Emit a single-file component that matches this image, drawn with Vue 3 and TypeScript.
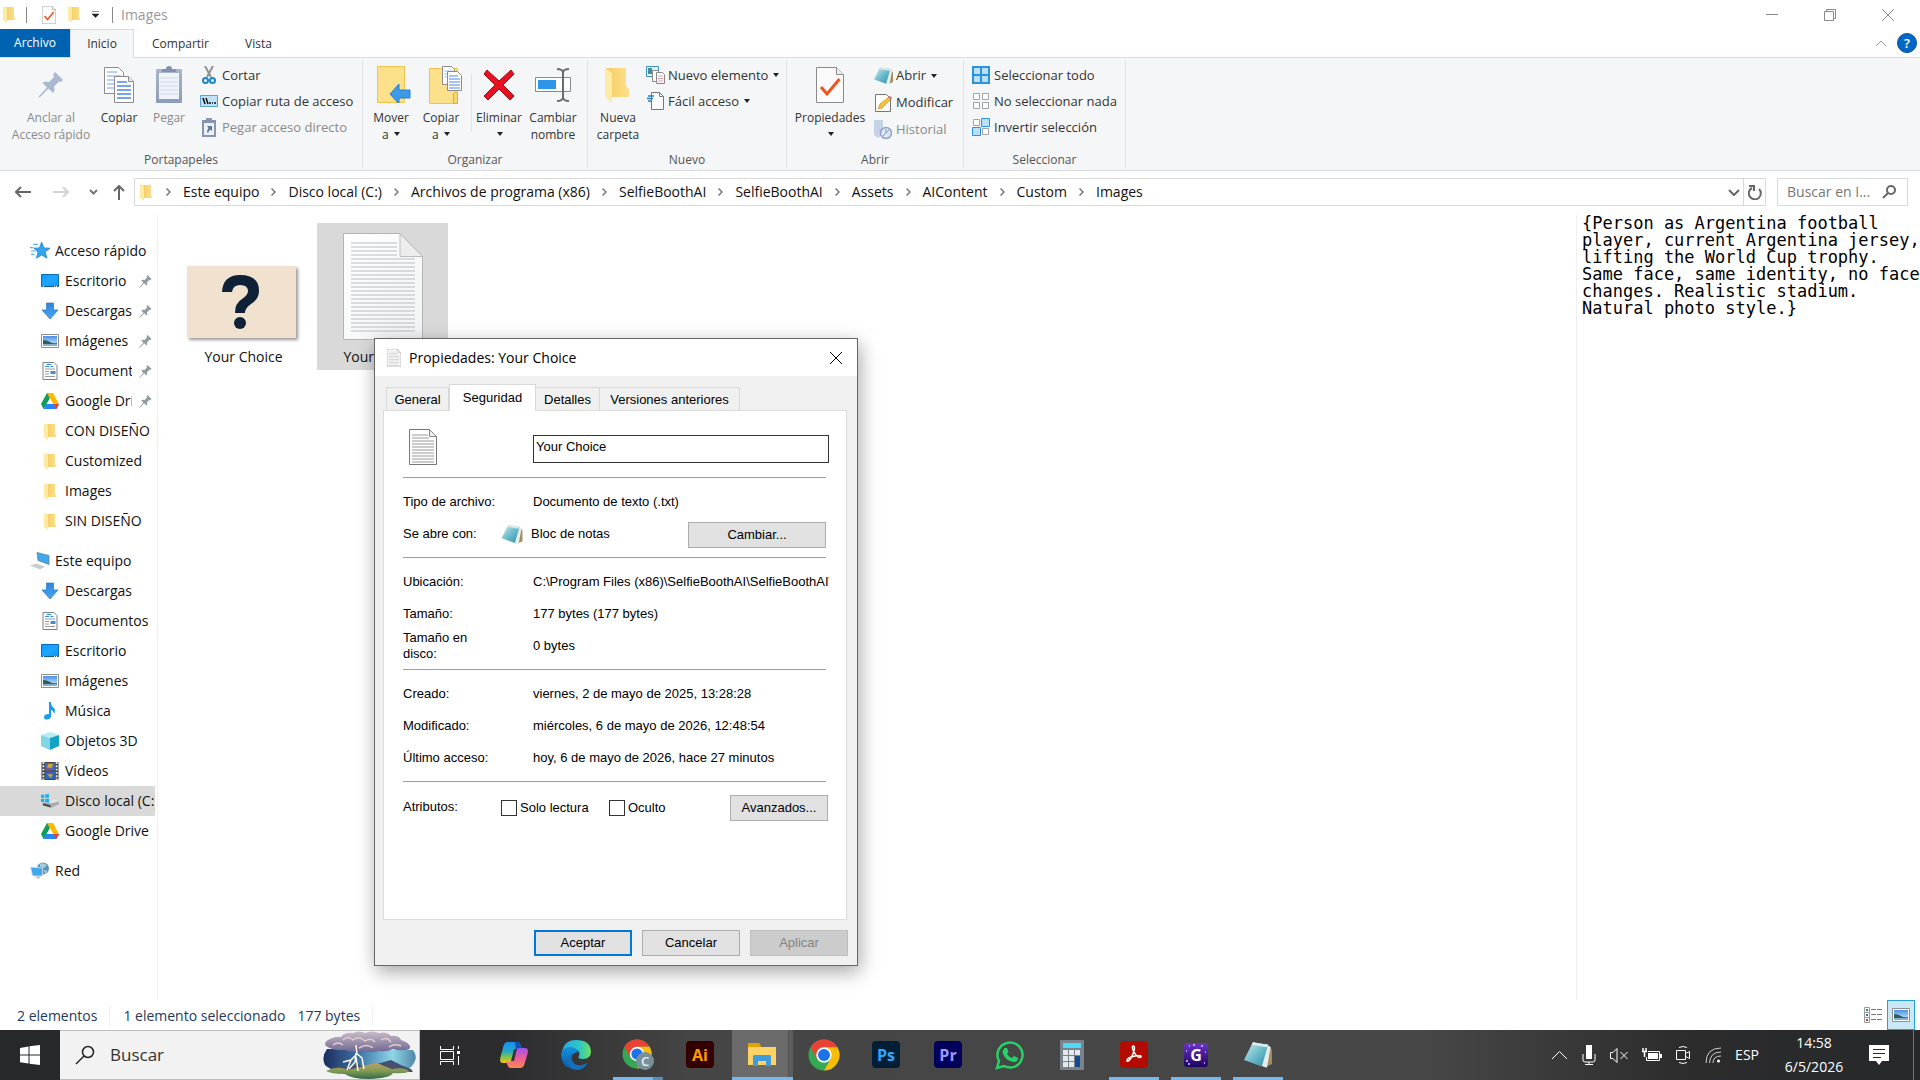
<script setup lang="ts">
import { ref } from 'vue'

interface NavItem {
  label: string
  icon: string
  pinned?: boolean
  selected?: boolean
}
interface NavGroup {
  label: string
  icon: string
  items: NavItem[]
}
interface TaskApp {
  name: string
  icon: string
  state?: 'open' | 'active' | 'multi'
  mark?: string
  markX?: number
  markY?: number
}

const crumbs: string[] = [
  'Este equipo',
  'Disco local (C:)',
  'Archivos de programa (x86)',
  'SelfieBoothAI',
  'SelfieBoothAI',
  'Assets',
  'AIContent',
  'Custom',
  'Images',
]

const navGroups: NavGroup[] = [
  {
    label: 'Acceso rápido',
    icon: 'star',
    items: [
      { label: 'Escritorio', icon: 'desktop', pinned: true },
      { label: 'Descargas', icon: 'download', pinned: true },
      { label: 'Imágenes', icon: 'picture', pinned: true },
      { label: 'Documentos', icon: 'document', pinned: true },
      { label: 'Google Drive', icon: 'gdrive', pinned: true },
      { label: 'CON DISEÑO', icon: 'folder' },
      { label: 'Customized', icon: 'folder' },
      { label: 'Images', icon: 'folder' },
      { label: 'SIN DISEÑO', icon: 'folder' },
    ],
  },
  {
    label: 'Este equipo',
    icon: 'pc',
    items: [
      { label: 'Descargas', icon: 'download' },
      { label: 'Documentos', icon: 'document' },
      { label: 'Escritorio', icon: 'desktop' },
      { label: 'Imágenes', icon: 'picture' },
      { label: 'Música', icon: 'music' },
      { label: 'Objetos 3D', icon: 'cube' },
      { label: 'Vídeos', icon: 'video' },
      { label: 'Disco local (C:)', icon: 'disk', selected: true },
      { label: 'Google Drive', icon: 'gdrive' },
    ],
  },
  { label: 'Red', icon: 'network', items: [] },
]

const apps: TaskApp[] = [
  { name: 'Copilot', icon: 'copilot' },
  { name: 'Edge', icon: 'edge' },
  { name: 'Chrome, perfil C', icon: 'chrome-profile', state: 'multi', mark: 'C', markX: 23, markY: 27 },
  { name: 'Illustrator', icon: 'ai', mark: 'Ai', markX: 14, markY: 20 },
  { name: 'Explorador de archivos', icon: 'explorer', state: 'active' },
  { name: 'Chrome', icon: 'chrome' },
  { name: 'Photoshop', icon: 'ps', mark: 'Ps', markX: 14, markY: 20 },
  { name: 'Premiere', icon: 'pr', mark: 'Pr', markX: 14, markY: 20 },
  { name: 'WhatsApp', icon: 'whatsapp' },
  { name: 'Calculadora', icon: 'calc' },
  { name: 'Acrobat', icon: 'acrobat', state: 'open' },
  { name: 'G', icon: 'gapp', state: 'open', mark: 'G', markX: 12, markY: 18 },
  { name: 'Bloc de notas', icon: 'notepad', state: 'open' },
]

const fileName = ref('Your Choice')
const readOnly = ref(false)
const hidden = ref(false)

const locationRows = [
  ['Ubicación:', 'C:\\Program Files (x86)\\SelfieBoothAI\\SelfieBoothAI\\Assets'],
  ['Tamaño:', '177 bytes (177 bytes)'],
  ['Tamaño en disco:', '0 bytes'],
]
const dateRows = [
  ['Creado:', 'viernes, 2 de mayo de 2025, 13:28:28'],
  ['Modificado:', 'miércoles, 6 de mayo de 2026, 12:48:54'],
  ['Último acceso:', 'hoy, 6 de mayo de 2026, hace 27 minutos'],
]

const previewText = `{Person as Argentina football
player, current Argentina jersey,
lifting the World Cup trophy.
Same face, same identity, no face
changes. Realistic stadium.
Natural photo style.}`
</script>

<template>
  <div class="screen">
    <svg class="sprite" aria-hidden="true">
      <defs>
        <linearGradient id="g-fold" x1="0" x2="1"><stop offset="0" stop-color="#f7cd64" /><stop offset="1" stop-color="#fbe08b" /></linearGradient>
        <linearGradient id="g-note" x1="0" y1="0" x2="1" y2="1"><stop offset="0" stop-color="#d3eef2" /><stop offset=".5" stop-color="#6fbccc" /><stop offset="1" stop-color="#2b8fa6" /></linearGradient>
        <linearGradient id="g-page" x1="0" y1="0" x2="1" y2="1"><stop offset="0" stop-color="#fff" /><stop offset="1" stop-color="#f1f3f4" /></linearGradient>
        <linearGradient id="g-clip" x1="0" y1="0" x2="0" y2="1"><stop offset="0" stop-color="#a9b5ca" /><stop offset="1" stop-color="#8d9cba" /></linearGradient>
        <linearGradient id="g-desk" x1="0" y1="0" x2="1" y2="1"><stop offset="0" stop-color="#0c9bff" /><stop offset=".5" stop-color="#1ea6ff" /><stop offset="1" stop-color="#0b95fa" /></linearGradient>
        <linearGradient id="g-arrow" x1="0" y1="0" x2="0" y2="1"><stop offset="0" stop-color="#2e86d9" /><stop offset="1" stop-color="#4aa5f0" /></linearGradient>
        <linearGradient id="g-sky" x1="0" y1="0" x2="0" y2="1"><stop offset="0" stop-color="#4d90e8" /><stop offset="1" stop-color="#d8f0fa" /></linearGradient>
        <linearGradient id="g-cop1" x1="0" y1="0" x2="0" y2="1"><stop offset="0" stop-color="#1a8df0" /><stop offset=".45" stop-color="#23a8c9" /><stop offset=".7" stop-color="#7fc24b" /><stop offset="1" stop-color="#f5c518" /></linearGradient>
        <linearGradient id="g-cop2" x1="0" y1="0" x2="0" y2="1"><stop offset="0" stop-color="#a155e8" /><stop offset=".5" stop-color="#ef5a9c" /><stop offset="1" stop-color="#fb8a4c" /></linearGradient>
        <linearGradient id="g-edge1" x1="0" y1="0" x2="1" y2="0"><stop offset="0" stop-color="#2aa7e4" /><stop offset=".6" stop-color="#2cc6c8" /><stop offset="1" stop-color="#6fe15a" /></linearGradient>
        <linearGradient id="g-edge2" x1="0" y1="0" x2="0" y2="1"><stop offset="0" stop-color="#1591dd" /><stop offset="1" stop-color="#0c59a4" /></linearGradient>
        <linearGradient id="g-storm" x1="0" y1="0" x2="1" y2="0"><stop offset="0" stop-color="#1d2c5e" /><stop offset=".4" stop-color="#3f78a8" /><stop offset=".75" stop-color="#8fd6e8" /><stop offset="1" stop-color="#4f86a8" /></linearGradient>
        <linearGradient id="g-cloud" x1="0" y1="0" x2="0" y2="1"><stop offset="0" stop-color="#c9bcc8" /><stop offset="1" stop-color="#6f6793" /></linearGradient>
        <linearGradient id="g-hill" x1="0" y1="0" x2="0" y2="1"><stop offset="0" stop-color="#c0a062" /><stop offset=".5" stop-color="#7f9a52" /><stop offset="1" stop-color="#2f6a4c" /></linearGradient>
        <linearGradient id="g-gapp" x1="0" y1="0" x2="0" y2="1"><stop offset="0" stop-color="#6b35c9" /><stop offset="1" stop-color="#1d0560" /></linearGradient>
      </defs>

      <symbol id="i-folder" viewBox="0 0 12 17"><path d="M3 1h8v10l1 1v2H3z" fill="url(#g-fold)" /><path d="M0 0l4 2v15L0 14z" fill="#fdeaa5" /></symbol>
      <symbol id="i-folder-big" viewBox="0 0 26 36"><path d="M1 1h20v18l3 3v8H7z" fill="url(#g-fold)" /><path d="M0 1l7 5v30L0 30z" fill="#fdeba8" /></symbol>
      <symbol id="i-check" viewBox="0 0 28 36"><path d="M.5.5h20l7 7v28H.5z" fill="#fbfbfb" stroke="#8a8a8a" /><path d="M20.500.5v7h7" fill="#eee" stroke="#8a8a8a" /><path d="M5 20l6 7L23.500 12" fill="none" stroke="#f0541e" stroke-width="3" /></symbol>
      <symbol id="i-pin" viewBox="0 0 26 26"><path d="M17 0l8 8-2 2-2-.4-5 5q1.500 4-1 6.400l-4.500-4.500L2 25l-1.500.5L1 24l8-8.500L4.500 11q2.500-2.500 6.500-1l5-5-.8-2.500z" /></symbol>
      <symbol id="i-copy" viewBox="0 0 30 36"><path d="M.5.5h14l5 5v21H.5z" fill="#fff" stroke="#8b8b8b" /><path d="M3 5h10M3 9h14M3 13h14M3 17h14M3 21h14" stroke="#9fc1f5" stroke-width="1.500" /><path d="M10.500 9.500h14l5 5v21h-19z" fill="#fff" stroke="#8b8b8b" /><path d="M24.500 9.500v5h5" fill="#eee" stroke="#8b8b8b" /><path d="M13 15h10M13 19h14M13 23h14M13 27h14M13 31h14" stroke="#4a86e8" stroke-width="1.500" /></symbol>
      <symbol id="i-paste" viewBox="0 0 26 37"><rect y="3" width="26" height="34" rx="1" fill="url(#g-clip)" /><path d="M3 7h20v26H3z" fill="#f0f4fa" /><path d="M4 12h18M4 16h18M4 20h18M4 24h18M4 28h18" stroke="#cdd8e8" /><path d="M6 6V3h4q0-3 3-3t3 3h4v3z" fill="#8391ae" /></symbol>
      <symbol id="i-cut" viewBox="0 0 14 19"><path d="M3 0l6 11M11 0L5 11" stroke="#8c9299" stroke-width="2" /><circle cx="3.500" cy="14.500" r="2.500" fill="none" stroke="#1e86c8" stroke-width="2" /><circle cx="10.500" cy="14.500" r="2.500" fill="none" stroke="#1e86c8" stroke-width="2" /></symbol>
      <symbol id="i-path" viewBox="0 0 18 12"><path d="M.5.5h17v11H.5z" fill="#bfe2f8" stroke="#5aa3cf" /><path d="M3 3l2 6M6 3l2 6" stroke="#111" stroke-width="1.500" /><path d="M9 8h2M12 8h1M14 8h2" stroke="#111" stroke-width="1.500" /></symbol>
      <symbol id="i-shortcut" viewBox="0 0 14 19"><path d="M0 2h14v17H0z" fill="#8795b3" /><path d="M2 5h10v12H2z" fill="#eef2f8" /><path d="M4 0h6v4H4z" fill="#8795b3" /><path d="M5 8h5v5l-2-1.500L6 15l-1-1q0-2 1.500-4z" fill="#5c76a4" /></symbol>
      <symbol id="i-move" viewBox="-6 0 40 37"><path d="M.5.5h27v36H.5z" fill="#fde08a" stroke="#efc34c" /><path d="M13 28l9-10v6h11v8H22v6z" fill="#3e9ae8" stroke="#2a7fc8" /></symbol>
      <symbol id="i-copyto" viewBox="-8 0 41 38"><path d="M.5 2.500h28v35H.5z" fill="#fde08a" stroke="#efc34c" /><path d="M24.500 37.500V28q2-4 4 0v9.500z" fill="#fbd56d" stroke="#e3ad3a" /><path d="M13.500.5h9l3 3v15h-12z" fill="#fff" stroke="#8b8b8b" /><path d="M15 5h8M15 8h8M15 11h8" stroke="#9fc1f5" /><path d="M18.500 5.500h10l4 4v15h-14z" fill="#fff" stroke="#8b8b8b" /><path d="M20 10h9M20 13h11M20 16h11M20 19h11M20 22h11" stroke="#4a86e8" /></symbol>
      <symbol id="i-delete" viewBox="0 0 32 32"><path d="M4 1l12 11L28 1l3 4-11 11 11 11-4 4-11-11L5 31l-4-4 11-11L1 5z" fill="#e81123" stroke="#a50d0d" /></symbol>
      <symbol id="i-rename" viewBox="0 0 36 34"><path d="M.5 9.500h35v14H.5z" fill="#fff" stroke="#8b8b8b" /><path d="M3 12h18v9H3z" fill="#2f95e8" /><path d="M22 1q5 0 6 3 1-3 6-3M22 33q5 0 6-3 1 3 6 3M28 3v28" fill="none" stroke="#6b6b6b" stroke-width="2" /></symbol>
      <symbol id="i-newitem" viewBox="0 0 19 18"><path d="M.5.5h12v10H.5z" fill="#e3f1fa" stroke="#3d8fc0" /><path d="M2 2h4v6H2z" fill="#3d8fa0" /><path d="M6.500 4.500h6v11h-6z" fill="#fff" stroke="#888" /><path d="M10.500 6.500h6l2 2v9h-8z" fill="#fff" stroke="#888" /><path d="M12 10h5M12 12.500h5M12 15h5" stroke="#e2a0a8" /></symbol>
      <symbol id="i-easy" viewBox="0 0 17 18"><path d="M4.500.5h8l4 4v13h-12z" fill="#fff" stroke="#777" /><path d="M12.500.5v4h4" fill="none" stroke="#777" /><path d="M1 4h6M0 6.500h6M1 9h4" stroke="#2a7fc0" stroke-width="1.500" /></symbol>
      <symbol id="i-notepad" viewBox="0 0 22 20"><path d="M19 2l3 4v11l-4 2z" fill="#a58a5c" /><path d="M17 1l4 3-3 16-6-2z" fill="#e4ecec" /><path d="M7 0l12 2-5 17L0 14z" fill="url(#g-note)" /><path d="M7 0l12 2-1 2L6 2z" fill="#dfe9ea" /></symbol>
      <symbol id="i-edit" viewBox="0 0 17 18"><path d="M.5.5h11l4 4v13H.5z" fill="#fff" stroke="#777" /><path d="M3 15l2-5 9-7 2 2-9 9z" fill="#f9c23c" stroke="#c98a1a" stroke-width=".7" /><path d="M13 3l2-1 2 2-1 2z" fill="#e26a5a" /></symbol>
      <symbol id="i-history" viewBox="0 0 18 19"><path d="M0 0h9v14l-5 4L0 15z" fill="#c5d2e6" /><circle cx="12" cy="13" r="5.500" fill="#dfe7f2" stroke="#8fa5c8" stroke-width="1.500" /><path d="M9 16l3-3 3-3M12 13V9" stroke="#7f97bd" /></symbol>
      <symbol id="i-selall" viewBox="0 0 18 18"><path d="M0 0h18v18H0z" fill="#2b92e0" /><path d="M2 2h6v6H2zM10 2h6v6h-6zM2 10h6v6H2zM10 10h6v6h-6z" fill="#b9e0fb" /></symbol>
      <symbol id="i-selnone" viewBox="0 0 18 18"><path d="M1.500 1.500h6v6h-6zM10.500 1.500h6v6h-6zM1.500 10.500h6v6h-6zM10.500 10.500h6v6h-6z" fill="#fff" stroke="#a3a3a3" /></symbol>
      <symbol id="i-selinv" viewBox="0 0 18 18"><path d="M1.500 1.500h6v6h-6zM10.500 10.500h6v6h-6z" fill="#fff" stroke="#a3a3a3" /><path d="M9.500.5h8v8h-8zM.5 9.500h8v8h-8z" fill="#b9e0fb" stroke="#2b92e0" /></symbol>

      <symbol id="i-star" viewBox="0 0 18 16"><path d="M10.500 0l2 5.200 5.500.3-4.300 3.500 1.500 5.500-4.700-3-4.700 3 1.400-5.500L3.500 5.500l5-.3z" fill="#35a4ee" stroke="#1a82cf" stroke-width=".7" /><path d="M3 2h4M0 5h3M1 8h4M1 11h3" stroke="#4ab0f0" /></symbol>
      <symbol id="i-desktop" viewBox="0 0 18 14"><path d="M.5.5h17v12H.5z" fill="url(#g-desk)" stroke="#0a6ab5" /><path d="M1 12.500h16" stroke="#0b5c9c" /><path d="M2 12.500h1M13 12.500h1M15 12.500h1" stroke="#fff" /></symbol>
      <symbol id="i-download" viewBox="0 0 18 18"><path d="M5.500 1h7v7H17l-8 9-8-9h4.500z" fill="url(#g-arrow)" stroke="#2577c4" stroke-width=".7" /></symbol>
      <symbol id="i-picture" viewBox="0 0 18 14"><path d="M.5.5h17v13H.5z" fill="#fff" stroke="#8f8f8f" /><path d="M2 2h14v10H2z" fill="url(#g-sky)" /><path d="M2 6q4 0 7 2t7 1v1H2z" fill="#2f5f58" /><path d="M2 10h14v2H2z" fill="#7fb0cf" /></symbol>
      <symbol id="i-document" viewBox="0 0 15 18"><path d="M.5.5h11l3 3v14H.5z" fill="#fff" stroke="#808080" /><path d="M4 2.500h5M2.500 4.500h4M8 4.500h3" stroke="#2f95e0" /><path d="M2.500 7h10M2.500 9.500h4M2.500 12h4M2.500 14.500h10" stroke="#9a9a9a" /><path d="M8 9h5v3H8z" fill="#3f8fd0" /></symbol>
      <symbol id="i-gdrive" viewBox="0 0 18 16"><path d="M6 0h6L5 12l-2.500 4L0 11z" fill="#0f9d58" /><path d="M6 0h6l6 11h-6z" fill="#ffba00" /><path d="M5 11h13l-2.500 5h-13z" fill="#2684fc" /><path d="M12 11h6l-2.500 5z" fill="#ea4335" /><path d="M9 5l3 6H6z" fill="#fff" /></symbol>
      <symbol id="i-pc" viewBox="0 0 20 17"><path d="M7 0l12 3v9L8 8z" fill="#3fa7ee" stroke="#6a8497" stroke-width=".8" /><path d="M0 13l6-2 9 3-5 3z" fill="#c8cdd2" /></symbol>
      <symbol id="i-music" viewBox="0 0 12 18"><path d="M5 0h2q0 4 3 6 2 3 0 6 0-3-3-4v6q0 3-3.500 3.500T0 15q0-3 5-3z" fill="#1a9bf0" /></symbol>
      <symbol id="i-cube" viewBox="0 0 18 18"><path d="M9 0l9 3-9 3-9-3z" fill="#b8eaf2" /><path d="M0 3l9 3v12l-9-4z" fill="#7fd6e6" /><path d="M18 3L9 6v12l9-4z" fill="#14a2c4" /></symbol>
      <symbol id="i-video" viewBox="0 0 18 19"><path d="M0 0h18v19H0z" fill="#444" /><path d="M2 0v19M16 0v19" stroke="#e6e6e6" stroke-width="2" stroke-dasharray="2 1.500" /><path d="M4 1h10v8H4z" fill="#3a6fd0" /><path d="M4 10h10v8H4z" fill="#2f66c8" /><path d="M7 2h5l-1 4H6zM6 13h6l-2 4z" fill="#d8a52c" /><path d="M5 7h6v2H5z" fill="#c8402c" /></symbol>
      <symbol id="i-disk" viewBox="0 0 19 15"><path d="M0 1h3.500v3H0zM4.500.5h4v3.500h-4zM0 5h3.500v3.500H0zM4.500 5h4v4h-4z" fill="#15b0ee" /><path d="M9 8l5-2 5 2-8 3z" fill="#e3e3e3" /><path d="M2 9l9 1 8-2v3l-9 4-8-3z" fill="#a9adb0" /><path d="M2 10l8 2v2l-8-2z" fill="#444" /></symbol>
      <symbol id="i-network" viewBox="0 0 19 18"><circle cx="12.500" cy="6.500" r="6" fill="#5f93b5" /><path d="M9 2q4-2 7 1l-2 3-4-1zM13 8l4 1-2 3z" fill="#a4d0e3" /><path d="M0 5l12 1v8L2 14z" fill="#3fa7ee" stroke="#dbe8f0" stroke-width=".8" /><path d="M4 15l5-1v3z" fill="#b8bfc4" /></symbol>

      <symbol id="i-textfile" viewBox="0 0 80 107"><path d="M.5.5H57l22.500 23v83H.5z" fill="url(#g-page)" stroke="#b4b4b4" /><path v-for="n in 23" :key="n" :d="n < 5 ? `M8 ${6 + n * 4}h46` : `M8 ${6 + n * 4}h64`" stroke="#b9bdc0" /><path d="M57 .5v23h22.500z" fill="#ededed" stroke="#bbb" /></symbol>
      <symbol id="i-textfile-small" viewBox="0 0 28 36"><path d="M.5.5h20l7 7v28H.5z" fill="#fff" stroke="#777" /><path d="M3 6h16M3 9h17M3 12h22M3 15h22M3 18h22M3 21h22M3 24h22M3 27h22M3 30h22M3 33h22" stroke="#999" /><path d="M20.500.5v7h7z" fill="#eee" stroke="#888" /></symbol>

      <symbol id="i-search" viewBox="0 0 20 20"><circle cx="13" cy="7" r="5.500" fill="none" stroke="currentColor" stroke-width="1.500" /><path d="M9 11L1 19" stroke="currentColor" stroke-width="1.500" /></symbol>
      <symbol id="i-x" viewBox="0 0 12 12"><path d="M0 0l12 12M12 0L0 12" stroke="currentColor" /></symbol>
      <symbol id="i-chev" viewBox="0 0 12 7"><path d="M1 1l5 5 5-5" fill="none" stroke="currentColor" stroke-width="2" /></symbol>

      <symbol id="i-copilot" viewBox="0 0 28 26"><path d="M8 0h9q3 0 4 4l1 3h-3q-3 0-4 3l-3 9q-1 2-4 2H3q-4 0-2.500-6l3-11Q4.500 0 8 0z" fill="url(#g-cop1)" /><path d="M15 0h2q3 0 4 4l1 3h-3q-2 0-3 1z" fill="#1550b5" /><path d="M20 26h-9q-3 0-4-4l-1-2h3q3 0 4-3l3-9q1-2 4-2h5q4 0 2.500 6l-3 10q-1 4-4.500 4z" fill="url(#g-cop2)" /><path d="M14 7h3l-3 12h-3z" fill="#37363a" /></symbol>
      <symbol id="i-edge" viewBox="0 0 30 30"><path d="M1 12Q3 0 15 0q14 0 15 11 0 8-8 8-6 0-4-3 2-5-4-7-8-2-13 3z" fill="url(#g-edge1)" /><path d="M0 15q1-8 9-8 6 0 8 5-8 1-7 8 1 6 8 8-3 2-7 1Q1 27 0 15z" fill="url(#g-edge2)" /><path d="M13 13q-4 4-1 9 3 4 9 3 4-1 6-3-4 8-11 8-8-1-9-8 0-7 6-9z" fill="#1470bd" /></symbol>
      <symbol id="i-chrome" viewBox="0 0 32 32"><circle cx="16" cy="16" r="15.500" fill="#34a853" /><path d="M16 .5A15.500 15.500 0 0 1 29.400 8.200H16L9 20 2.600 8.200A15.500 15.500 0 0 1 16 .5z" fill="#ea4335" /><path d="M29.400 8.200A15.500 15.500 0 0 1 16 31.500l6.700-11.600L16 8.200z" fill="#fbbc05" /><circle cx="16" cy="16" r="7.700" fill="#fff" /><circle cx="16" cy="16" r="6" fill="#1a73e8" /></symbol>
      <symbol id="i-chrome-profile" viewBox="0 0 32 32"><use href="#i-chrome" width="30" height="30" /><circle cx="23" cy="22" r="9" fill="#78909c" /></symbol>
      <symbol id="i-ai" viewBox="0 0 28 28"><rect width="28" height="27" rx="4" fill="#330000" /></symbol>
      <symbol id="i-ps" viewBox="0 0 28 28"><rect width="28" height="27" rx="4" fill="#001e36" /></symbol>
      <symbol id="i-pr" viewBox="0 0 28 28"><rect width="28" height="27" rx="4" fill="#00005b" /></symbol>
      <symbol id="i-explorer" viewBox="0 0 28 24"><path d="M0 0h11l2 3v5H0z" fill="#e3a008" /><path d="M0 4h28v18H0z" fill="#fdd366" /><path d="M5 23V13q0-1 2-1h14q2 0 2 1v10h-5v-5h-8v5z" fill="#3f9bdc" /></symbol>
      <symbol id="i-whatsapp" viewBox="0 0 30 30"><path d="M2 28l2-7A12.500 12.500 0 1 1 9 26z" fill="none" stroke="#25d366" stroke-width="2.500" /><path d="M9.500 8h2.500l1.500 4-1.500 2q2 3 5 4l2-2 4 2q0 4-4 4-9-1-11.500-9.500Q7.500 10 9.500 8z" fill="#25d366" /></symbol>
      <symbol id="i-calc" viewBox="0 0 24 30"><rect width="24" height="30" rx="1" fill="#7a828c" /><path d="M3 3h18v5H3z" fill="#4fd8f8" /><path d="M3 10h5v5H3zM9 10h5v5H9zM15 10h5v5h-5zM3 16h5v5H3zM9 16h5v5H9zM3 22h5v5H3zM9 22h5v5H9z" fill="#e4e9ee" /><path d="M15 16h5v11h-5z" fill="#174a8c" /></symbol>
      <symbol id="i-acrobat" viewBox="0 0 28 28"><rect width="28" height="27" rx="4" fill="#b30b00" /><path d="M7 20q-1-3 8-5 7-1 6 1-3 2-7-5-3-6-.5-6 2.500 1-1 9-3 7-5.500 6z" fill="none" stroke="#fff" stroke-width="1.500" /></symbol>
      <symbol id="i-gapp" viewBox="0 0 24 24"><rect width="24" height="24" rx="3" fill="url(#g-gapp)" /><path d="M5 3h1M17 3h2M2 8h1M21 9h1M2 18h2M20 20h1M9 2h2M4 21h2" stroke="#d9c5ff" stroke-width="1.500" /></symbol>
    </svg>

    <header class="titlebar">
      <svg class="ic-folder"><use href="#i-folder" /></svg>
      <span class="bar"></span>
      <button class="qa" aria-label="Propiedades"><svg width="14" height="18"><use href="#i-check" /></svg></button>
      <button class="qa" aria-label="Nueva carpeta"><svg class="ic-folder"><use href="#i-folder" /></svg></button>
      <button class="qa" aria-label="Personalizar"><svg width="7" height="7" viewBox="0 0 7 7"><path d="M0 .5h7M0 3h7L3.500 6.500z" fill="#222" stroke="#222" stroke-width=".5" /></svg></button>
      <span class="bar bar-last"></span>
      <h1>Images</h1>
      <div class="win-controls">
        <button aria-label="Minimizar"><svg width="12" height="12"><path d="M0 5.500h12" stroke="currentColor" /></svg></button>
        <button aria-label="Restaurar"><svg width="12" height="12"><path d="M.5 2.500h9v9h-9zM2.500 2.500v-2h9v9h-2" fill="none" stroke="currentColor" /></svg></button>
        <button aria-label="Cerrar"><svg width="12" height="12"><use href="#i-x" /></svg></button>
      </div>
    </header>

    <nav class="tabs" aria-label="Cinta">
      <button class="tab file">Archivo</button>
      <button class="tab current">Inicio</button>
      <button class="tab">Compartir</button>
      <button class="tab">Vista</button>
      <div class="tabs-right">
        <button class="collapse" aria-label="Minimizar la cinta"><svg width="12" height="7"><path d="M1 6l5-5 5 5" fill="none" stroke="#999" /></svg></button>
        <button class="help" aria-label="Ayuda">?</button>
      </div>
    </nav>

    <section class="ribbon">
      <div class="group g-clipboard">
        <div class="group-body">
          <button class="big wide" disabled><span class="slot"><svg class="pin-big" width="26" height="26"><use href="#i-pin" /></svg></span>Anclar al<br />Acceso rápido</button>
          <button class="big"><span class="slot"><svg width="30" height="36"><use href="#i-copy" /></svg></span>Copiar</button>
          <button class="big" disabled><span class="slot"><svg width="26" height="37"><use href="#i-paste" /></svg></span>Pegar</button>
          <div class="small-col">
            <button class="small"><span class="sic"><svg width="14" height="19"><use href="#i-cut" /></svg></span>Cortar</button>
            <button class="small"><span class="sic"><svg width="18" height="12"><use href="#i-path" /></svg></span>Copiar ruta de acceso</button>
            <button class="small" disabled><span class="sic"><svg width="14" height="19"><use href="#i-shortcut" /></svg></span>Pegar acceso directo</button>
          </div>
        </div>
        <div class="group-name">Portapapeles</div>
      </div>
      <div class="group g-organize">
        <div class="group-body">
          <button class="big"><span class="slot"><svg width="40" height="37"><use href="#i-move" /></svg></span>Mover<br />a <i class="dd"></i></button>
          <button class="big"><span class="slot"><svg width="41" height="38"><use href="#i-copyto" /></svg></span>Copiar<br />a <i class="dd"></i></button>
          <span class="inner-sep"></span>
          <button class="big mid"><span class="slot"><svg width="32" height="32"><use href="#i-delete" /></svg></span>Eliminar<br /><i class="dd"></i></button>
          <button class="big mid"><span class="slot"><svg width="36" height="34"><use href="#i-rename" /></svg></span>Cambiar<br />nombre</button>
        </div>
        <div class="group-name">Organizar</div>
      </div>
      <div class="group g-new">
        <div class="group-body">
          <button class="big mid"><span class="slot"><svg width="26" height="36"><use href="#i-folder-big" /></svg></span>Nueva<br />carpeta</button>
          <div class="small-col">
            <button class="small"><span class="sic"><svg width="19" height="18"><use href="#i-newitem" /></svg></span>Nuevo elemento <i class="dd"></i></button>
            <button class="small"><span class="sic"><svg width="17" height="18"><use href="#i-easy" /></svg></span>Fácil acceso <i class="dd"></i></button>
          </div>
        </div>
        <div class="group-name">Nuevo</div>
      </div>
      <div class="group g-open">
        <div class="group-body">
          <button class="big wide"><span class="slot"><svg width="28" height="36"><use href="#i-check" /></svg></span>Propiedades<br /><i class="dd"></i></button>
          <div class="small-col">
            <button class="small"><span class="sic"><svg width="19" height="18"><use href="#i-notepad" /></svg></span>Abrir <i class="dd"></i></button>
            <button class="small"><span class="sic"><svg width="17" height="18"><use href="#i-edit" /></svg></span>Modificar</button>
            <button class="small" disabled><span class="sic"><svg width="18" height="19"><use href="#i-history" /></svg></span>Historial</button>
          </div>
        </div>
        <div class="group-name">Abrir</div>
      </div>
      <div class="group g-select">
        <div class="group-body">
          <div class="small-col">
            <button class="small"><span class="sic"><svg width="18" height="18"><use href="#i-selall" /></svg></span>Seleccionar todo</button>
            <button class="small"><span class="sic"><svg width="18" height="18"><use href="#i-selnone" /></svg></span>No seleccionar nada</button>
            <button class="small"><span class="sic"><svg width="18" height="18"><use href="#i-selinv" /></svg></span>Invertir selección</button>
          </div>
        </div>
        <div class="group-name">Seleccionar</div>
      </div>
    </section>

    <div class="address-row">
      <div class="history">
        <button aria-label="Atrás"><svg width="16" height="12"><path d="M1 6h15M6 1L1 6l5 5" fill="none" stroke="#666" stroke-width="2" /></svg></button>
        <button aria-label="Adelante" disabled><svg width="16" height="12"><path d="M0 6h15M10 1l5 5-5 5" fill="none" stroke="#d4d4d4" stroke-width="2" /></svg></button>
        <button class="narrow" aria-label="Recientes"><svg width="9" height="6"><path d="M1 1l3.500 3.500L8 1" fill="none" stroke="#777" stroke-width="2" /></svg></button>
        <button class="narrow" aria-label="Subir"><svg width="12" height="15"><path d="M6 1v14M1 6l5-5 5 5" fill="none" stroke="#666" stroke-width="2" /></svg></button>
      </div>
      <div class="path">
        <svg class="ic-folder"><use href="#i-folder" /></svg>
        <template v-for="(c, i) in crumbs" :key="i">
          <svg class="crumb-sep" width="5" height="8"><path d="M.5.5L4 4 .5 7.500" fill="none" stroke="#777" stroke-width="1.500" /></svg>
          <a href="#">{{ c }}</a>
        </template>
        <button class="path-drop" aria-label="Ubicaciones anteriores"><svg width="12" height="7"><use href="#i-chev" /></svg></button>
        <button class="reload" aria-label="Actualizar"><svg width="14" height="16"><path d="M4 4a6 6 0 1 0 7 1M1 2h5v5" fill="none" stroke="#666" stroke-width="2" /></svg></button>
      </div>
      <div class="search">
        <input type="text" aria-label="Buscar en Images" placeholder="Buscar en I..." />
        <svg width="14" height="14"><circle cx="9" cy="5" r="4" fill="none" stroke="#666" stroke-width="2" /><path d="M6 8l-5 5" stroke="#666" stroke-width="2" /></svg>
      </div>
    </div>

    <main class="content">
      <aside class="nav">
        <div v-for="g in navGroups" :key="g.label" class="nav-group">
          <a href="#" class="nav-item"><span class="nic"><svg width="20" height="18"><use :href="`#i-${g.icon}`" /></svg></span><span class="nlabel">{{ g.label }}</span></a>
          <a v-for="it in g.items" :key="it.label" href="#" class="nav-item child" :class="{ selected: it.selected }">
            <span class="nic"><svg width="18" :height="it.icon === 'folder' ? 17 : 18"><use :href="`#i-${it.icon}`" /></svg></span>
            <span class="nlabel">{{ it.label }}</span>
            <svg v-if="it.pinned" class="pin" width="13" height="13"><use href="#i-pin" /></svg>
          </a>
        </div>
      </aside>

      <section class="files">
        <figure class="file-tile">
          <div class="thumb-area"><svg class="thumb" width="109" height="72"><rect width="109" height="72" fill="#f1e2cf" /><path d="M35 26Q36 9 53 9q19 0 19 16 0 8-8 13-6 4-6 9H48q0-10 7-14 6-4 6-8 0-6-8-6-7 0-8 7z" fill="#0e2136" /><circle cx="53" cy="57" r="6" fill="#0e2136" /></svg></div>
          <figcaption>Your Choice</figcaption>
        </figure>
        <figure class="file-tile chosen">
          <div class="thumb-area"><svg width="80" height="107"><use href="#i-textfile" /></svg></div>
          <figcaption>Your Choice</figcaption>
        </figure>
      </section>

      <pre class="preview">{{ previewText }}</pre>
    </main>

    <footer class="status">
      <span class="st first">2 elementos</span>
      <span class="st">1 elemento seleccionado</span>
      <span class="st last">177 bytes</span>
      <div class="view-switch">
        <button aria-label="Detalles"><svg width="18" height="16"><path d="M.5.5h5v5h-5zM.5 5.500h5v5h-5zM.5 10.500h5v5h-5z" fill="#fff" stroke="#999" /><path d="M2 3h2" stroke="#3a7a6a" stroke-width="2" /><path d="M2 8h2" stroke="#3d6fb0" stroke-width="2" /><path d="M2 13h2" stroke="#c83a20" stroke-width="2" /><path d="M7 2.500h5M13 2.500h5M7 7.500h5M13 7.500h5M7 12.500h5M13 12.500h5" stroke="#777" /></svg></button>
        <button class="on" aria-label="Vistas en miniatura"><svg width="18" height="14"><use href="#i-picture" /></svg></button>
      </div>
    </footer>

    <div class="taskbar">
      <button class="start" aria-label="Inicio"><svg width="20" height="20"><path d="M0 3l8.500-1.500v8H0zM9.500 1.300L20 0v9.500H9.500zM0 10.500h8.500v8L0 17.300zM9.500 10.500H20V20L9.500 18.700z" fill="#fff" /></svg></button>
      <label class="task-search">
        <svg width="20" height="20"><use href="#i-search" /></svg>
        <input type="text" placeholder="Buscar" aria-label="Buscar" />
        <svg class="storm" width="93" height="48" viewBox="0 0 93 48">
          <path d="M4 18q-6 8-2 16 4 4 10 5h68q8-1 11-7 4-6-1-13z" fill="url(#g-storm)" />
          <path d="M4 40l12-5 8 2 10-4 8 3 12-3 14-4 10 5 10 4 2 3z" fill="#46506f" />
          <path d="M3 40q12-6 22-1l20-5q8-4 16 1l8 3q12-2 17 2-2 3-16 2-2 5-24 6-18 0-24-5-14 0-19-3z" fill="url(#g-hill)" />
          <path d="M3 15q-3-4 4-7 6-3 11-2Q22 1 30 2q6-3 12 0Q48-1 56 2q8-2 12 3 8-1 10 4 7 2 9 6 1 4-5 4-6 1-12-1-6 3-14 2-8 2-16 0-10 2-18-1-12 1-19-4z" fill="url(#g-cloud)" />
          <path d="M20 9q5-5 10 0 6-5 12 1 6-4 10 1M58 9q6-4 10 2M66 16q6-4 12-1M10 14q5-4 10 0M36 17q8-5 14 0" fill="none" stroke="#e0cdc8" stroke-width="1.500" />
          <path d="M33 14l1 9-6 6-4 10M33 22l-1 9-6 7M33 22l6 5 2 11M33 26l2 14M28 29l-8 2" fill="none" stroke="#fdf8e8" stroke-width="1.500" />
        </svg>
      </label>
      <button class="task-view" aria-label="Vista de tareas"><svg width="21" height="19"><path d="M.5 0v3.500h13V0M.5 19v-3.500h13V19M.5 5.500h13v8H.5z M18.500 0v3M18.500 10v9" fill="none" stroke="#fff" /><path d="M17 5h3v3h-3z" fill="#fff" /></svg></button>
      <button v-for="a in apps" :key="a.name" class="app" :class="a.state" :aria-label="a.name">
        <svg :class="`app-${a.icon}`"><use :href="`#i-${a.icon}`" /><text v-if="a.mark" :x="a.markX" :y="a.markY" text-anchor="middle">{{ a.mark }}</text></svg>
      </button>
      <div class="tray">
        <button aria-label="Iconos ocultos"><svg width="17" height="10"><path d="M1 9l7.500-7.500L16 9" fill="none" stroke="#fff" /></svg></button>
        <button aria-label="Micrófono"><svg width="14" height="20"><path d="M4 0h6v14H4z" fill="#fff" /><path d="M1 9v6q0 2 2 2h8q2 0 2-2V9M7 17v2.500M3 19.500h8" fill="none" stroke="#fff" /></svg></button>
        <button aria-label="Volumen"><svg width="18" height="15"><path d="M.5 4.500H3l4-4v14l-4-4H.5zM10.500 4l7 7M17.500 4l-7 7" fill="none" stroke="#fff" /></svg></button>
        <button aria-label="Batería"><svg width="20" height="14"><path d="M6 3.500h11.500v9h-13V9" fill="none" stroke="#fff" /><path d="M6 5h10v6H6zM18 6h2v4h-2z" fill="#fff" /><path d="M1 0v3M4 0v3M0 3.500h5M2.500 3v6" stroke="#fff" stroke-width="1.500" /></svg></button>
        <button aria-label="Reunirse"><svg width="15" height="18"><path d="M.5 4.500h9v9h-9zM9.500 7.500l4-2v7l-4-2M3 1.500q4-2 8 0M3 16.500q4 2 8 0" fill="none" stroke="#fff" /></svg></button>
        <button aria-label="Red"><svg width="16" height="16"><path d="M1 16Q1 1 16 1M4.500 16Q5 5 16 5M8 16q0-7 8-7" fill="none" stroke="#ccc" /><circle cx="13.500" cy="14" r="1.500" fill="#fff" /></svg></button>
        <button class="lang">ESP</button>
        <button class="clock"><span>14:58</span><span>6/5/2026</span></button>
        <button class="notif" aria-label="Notificaciones"><svg width="20" height="20"><path d="M0 0h20v16h-7l-3 4-3-4H0z" fill="#fff" /><path d="M4 4.500h12M4 8.500h12M4 12.500h8" stroke="#2b2b2b" /></svg></button>
        <span class="peek"></span>
      </div>
    </div>

    <section class="dialog" role="dialog" aria-label="Propiedades: Your Choice">
      <header class="dlg-title">
        <svg class="dim" width="14" height="18"><use href="#i-textfile-small" /></svg>
        <h2>Propiedades: Your Choice</h2>
        <button aria-label="Cerrar"><svg width="12" height="12"><use href="#i-x" /></svg></button>
      </header>
      <div class="dlg-tabs">
        <button>General</button>
        <button class="sel">Seguridad</button>
        <button>Detalles</button>
        <button class="long">Versiones anteriores</button>
      </div>
      <div class="panel">
        <div class="head">
          <svg width="28" height="36"><use href="#i-textfile-small" /></svg>
          <input v-model="fileName" type="text" aria-label="Nombre" />
        </div>
        <hr />
        <dl class="sec">
          <div class="row"><dt>Tipo de archivo:</dt><dd>Documento de texto (.txt)</dd></div>
          <div class="row opens"><dt>Se abre con:</dt><dd><svg width="22" height="19"><use href="#i-notepad" /></svg>Bloc de notas<button class="btn change">Cambiar...</button></dd></div>
        </dl>
        <hr />
        <dl class="sec">
          <div v-for="r in locationRows" :key="r[0]" class="row"><dt>{{ r[0] }}</dt><dd>{{ r[1] }}</dd></div>
        </dl>
        <hr />
        <dl class="sec">
          <div v-for="r in dateRows" :key="r[0]" class="row"><dt>{{ r[0] }}</dt><dd>{{ r[1] }}</dd></div>
        </dl>
        <hr />
        <div class="sec attrs">
          <span class="attr-name">Atributos:</span>
          <label><input v-model="readOnly" type="checkbox" />Solo lectura</label>
          <label><input v-model="hidden" type="checkbox" />Oculto</label>
          <button class="btn adv">Avanzados...</button>
        </div>
      </div>
      <div class="dlg-buttons">
        <button class="btn primary">Aceptar</button>
        <button class="btn">Cancelar</button>
        <button class="btn" disabled>Aplicar</button>
      </div>
    </section>
  </div>
</template>

<style>
html,
body {
  margin: 0;
  background: #fff;
}
</style>

<style scoped>
.screen {
  position: relative;
  display: flex;
  flex-direction: column;
  min-height: 100vh;
  overflow: hidden;
  background: #fff;
  color: #111;
  font-family: 'Open Sans', 'Noto Sans', sans-serif;
  font-size: 14px;
  line-height: 20px;
}
.screen *,
.screen *::before {
  box-sizing: border-box;
}
.sprite {
  position: absolute;
  width: 0;
  height: 0;
}
svg {
  display: block;
  flex: none;
}
button {
  padding: 0;
  border: 0;
  background: none;
  color: inherit;
  font: inherit;
  white-space: nowrap;
}
a {
  color: inherit;
  text-decoration: none;
}
h1,
h2 {
  margin: 0;
  font-size: 14px;
  font-weight: 400;
}
.ic-folder {
  width: 12px;
  height: 17px;
}

/* Title bar */
.titlebar {
  display: flex;
  align-items: center;
  height: 29px;
  padding-left: 3px;
}
.bar {
  width: 1px;
  height: 16px;
  margin: 0 15px 0 11px;
  background: #888;
}
.bar-last {
  margin: 0 8px 0 1px;
}
.qa {
  margin-right: 12px;
}
.titlebar h1 {
  flex: 1;
  color: #999;
}
.win-controls {
  display: flex;
  color: #888;
}
.win-controls button {
  display: flex;
  align-items: center;
  justify-content: center;
  width: 58px;
  height: 28px;
}
.win-controls button:last-child {
  margin-right: 3px;
}

/* Ribbon tabs */
.tabs {
  display: flex;
  height: 29px;
  border-bottom: 1px solid #dadbdc;
  color: #333;
  font-size: 12px;
}
.tab {
  padding: 2px 18px 0;
}
.tab.file {
  width: 70px;
  padding: 0;
  background: #0063b1;
  color: #fff;
}
.tab.current {
  position: relative;
  z-index: 1;
  width: 64px;
  height: 29px;
  padding: 0;
  border: 1px solid #dadbdc;
  border-bottom: 0;
  background: #f5f6f7;
}
.tabs-right {
  display: flex;
  align-items: center;
  gap: 10px;
  margin-left: auto;
  padding-right: 3px;
}
.help {
  width: 20px;
  height: 20px;
  border: 1px solid #084f96;
  border-radius: 50%;
  background: #0067c6;
  color: #fff;
  font-size: 13px;
  font-weight: 600;
  line-height: 18px;
}

/* Ribbon */
.ribbon {
  display: flex;
  height: 113px;
  padding: 2px 0;
  border-bottom: 1px solid #dadbdc;
  background: #f5f6f7;
  color: #333;
  font-size: 12px;
  line-height: 17px;
}
.group {
  display: flex;
  flex-direction: column;
  justify-content: space-between;
  border-right: 1px solid #e0e1e2;
}
.g-clipboard {
  width: 363px;
}
.g-organize {
  width: 225px;
}
.g-new {
  width: 199px;
}
.g-open {
  width: 177px;
}
.g-select {
  width: 162px;
}
.group-body {
  display: flex;
  align-items: flex-start;
}
.g-clipboard .group-body {
  padding-left: 8px;
}
.g-clipboard .small-col {
  margin-left: 5px;
}
.g-organize .group-body,
.g-new .group-body {
  padding-left: 3px;
}
.g-select .group-body {
  padding-left: 7px;
}
.group-name {
  color: #555;
  text-align: center;
}
.big {
  display: block;
  width: 50px;
  text-align: center;
}
.big.mid {
  width: 54px;
}
.big.wide {
  width: 86px;
}
.big:disabled,
.small:disabled {
  color: #8a8a8a;
}
.slot {
  display: flex;
  align-items: center;
  justify-content: center;
  height: 49px;
}
.pin-big {
  fill: #a9b9d2;
}
.dd {
  display: inline-block;
  width: 0;
  height: 0;
  margin: 0 0 3px 2px;
  border: 3px solid transparent;
  border-top: 4px solid #222;
  border-bottom: 0;
}
.small-col {
  display: flex;
  flex-direction: column;
  padding-top: 2px;
}
.small {
  display: flex;
  align-items: center;
  height: 26px;
  font-size: 13px;
}
.g-open .small {
  height: 27px;
}
.small .dd {
  margin: 0 0 0 5px;
}
.sic {
  display: flex;
  align-items: center;
  justify-content: center;
  width: 20px;
  margin-right: 3px;
}
.inner-sep {
  width: 1px;
  height: 58px;
  margin: 14px 0 0 5px;
  background: #e0e1e2;
}

/* Address bar */
.address-row {
  display: flex;
  align-items: center;
  height: 44px;
  padding: 0 12px 2px 4px;
}
.history {
  display: flex;
  align-items: center;
  width: 130px;
}
.history button {
  display: flex;
  align-items: center;
  justify-content: center;
  width: 38px;
}
.history .narrow {
  width: 26px;
}
.path {
  display: flex;
  align-items: center;
  flex: 1;
  height: 28px;
  padding-left: 5px;
  border: 1px solid #d9d9d9;
}
.path .ic-folder {
  margin-right: 2px;
}
.crumb-sep {
  margin: 0 12px;
}
.path-drop {
  margin: 0 3px 0 auto;
  color: #666;
}
.reload {
  display: flex;
  align-items: center;
  justify-content: center;
  width: 22px;
  height: 26px;
  border-left: 1px solid #d9d9d9;
}
.search {
  display: flex;
  align-items: center;
  width: 131px;
  height: 28px;
  margin-left: 11px;
  padding: 0 11px 0 9px;
  border: 1px solid #d9d9d9;
}
.search input {
  flex: 1;
  width: 0;
  padding: 0;
  border: 0;
  outline: 0;
  font: inherit;
}
.search input::placeholder {
  color: #777;
}

/* Content */
.content {
  display: flex;
  flex: 1;
}
.nav {
  width: 158px;
  padding-top: 21px;
  border-right: 1px solid #f0f0f0;
}
.nav-group {
  margin-bottom: 10px;
}
.nav-item {
  display: flex;
  align-items: center;
  width: 155px;
  height: 30px;
  padding-left: 30px;
}
.nav-item.child {
  padding-left: 40px;
}
.nav-item.selected {
  background: #d9d9d9;
}
.nic {
  display: flex;
  justify-content: center;
  width: 20px;
  margin-right: 5px;
}
.nlabel {
  flex: 1;
  overflow: hidden;
  white-space: nowrap;
}
.pin {
  margin: 0 3px 0 7px;
  fill: #8f9aa3;
}
.files {
  display: flex;
  flex: 1;
  align-items: flex-start;
  gap: 8px;
  padding: 8px 20px;
}
.file-tile {
  display: flex;
  flex-direction: column;
  width: 131px;
  height: 147px;
  margin: 0;
}
.file-tile.chosen {
  background: #d9d9d9;
}
.thumb-area {
  display: flex;
  align-items: flex-end;
  justify-content: center;
  height: 117px;
}
.file-tile:first-child .thumb-area {
  padding: 0 4px 2px 0;
}
.thumb {
  box-shadow: 2px 2px 3px #999;
}
figcaption {
  margin-top: 7px;
  text-align: center;
}
.preview {
  width: 344px;
  margin: 0;
  padding: 0 0 0 5px;
  border-left: 1px solid #f0f0f0;
  color: #000;
  font-family: 'DejaVu Sans Mono', monospace;
  font-size: 17px;
  line-height: 17px;
}

/* Status bar */
.status {
  display: flex;
  align-items: center;
  height: 30px;
  padding: 0 5px 0 17px;
  color: #1e395b;
}
.st {
  margin-top: 2px;
}
.st.first {
  margin-right: 13px;
  padding-right: 12px;
  border-right: 1px solid #eee;
}
.st.last {
  margin-left: 12px;
  padding-right: 12px;
  border-right: 1px solid #eee;
}
.view-switch {
  display: flex;
  align-self: stretch;
  margin-left: auto;
}
.view-switch button {
  display: flex;
  align-items: center;
  justify-content: center;
  width: 28px;
}
.view-switch .on {
  border: 1px solid #26a0da;
  background: #cbe8f6;
}

/* Taskbar */
.taskbar {
  display: flex;
  height: 50px;
  background: linear-gradient(90deg, #26282a 0, #2c2c2e 26%, #454545 36%, #474747 74%, #2c2c2d 88%, #26282a 100%);
  color: #fff;
}
.taskbar button {
  display: flex;
  align-items: center;
  justify-content: center;
}
.start {
  width: 60px;
}
.task-search {
  display: flex;
  align-items: center;
  width: 360px;
  padding: 0 3px 0 15px;
  border: 1px solid #bdbdbd;
  border-left: 0;
  background: #f2f2f2;
  color: #222;
}
.task-search input {
  flex: 1;
  width: 0;
  padding: 0 0 0 15px;
  border: 0;
  outline: 0;
  background: none;
  font: inherit;
  font-size: 17px;
}
.task-search input::placeholder {
  color: #333;
}
.taskbar .task-view {
  width: 63px;
  padding-right: 3px;
}
.app {
  position: relative;
  width: 62px;
}
.app.open::before,
.app.multi::before,
.app.active::before {
  content: '';
  position: absolute;
  right: 6px;
  bottom: 0;
  left: 6px;
  height: 3px;
  background: #76b9ed;
}
.app.multi::before {
  border-right: 10px solid #5c8db8;
}
.app.active {
  background: linear-gradient(90deg, transparent 1px, #6b6b6b 1px, #6b6b6b 57px, #484848 57px, #5d5d5d 58px);
}
.app.active::before {
  right: 0;
  left: 1px;
}
.app svg {
  width: 28px;
  height: 28px;
}
.app text {
  font-size: 16px;
  font-weight: 700;
}
.app .app-edge,
.app .app-whatsapp {
  width: 30px;
  height: 30px;
}
.app .app-chrome,
.app .app-chrome-profile {
  width: 32px;
  height: 32px;
}
.app .app-calc {
  height: 30px;
}
.app .app-gapp {
  width: 24px;
  height: 24px;
  fill: #fff;
}
.app-ai {
  fill: #ff9a00;
}
.app-ps {
  fill: #31a8ff;
}
.app-pr {
  fill: #9999ff;
}
.app-chrome-profile {
  fill: #eceff1;
}
.app .app-chrome-profile text {
  font-size: 13px;
  font-weight: 600;
}
.tray {
  display: flex;
  align-items: center;
  gap: 14px;
  margin-left: auto;
}
.tray .clock {
  flex-direction: column;
  width: 82px;
  line-height: 24px;
}
.peek {
  align-self: stretch;
  width: 7px;
  margin-left: 10px;
  border-left: 1px solid #777;
}

/* Properties dialog */
.dialog {
  position: absolute;
  top: 338px;
  left: 374px;
  width: 484px;
  border: 1px solid #666;
  background: #f0f0f0;
  box-shadow: 2px 6px 18px rgba(0, 0, 0, 0.35);
  color: #000;
  font-family: 'Liberation Sans', Arial, sans-serif;
  font-size: 13px;
  line-height: 16px;
}
.dlg-title {
  display: flex;
  align-items: center;
  height: 37px;
  padding: 0 15px 0 12px;
  background: #fff;
}
.dim {
  opacity: 0.7;
}
.dlg-title h2 {
  flex: 1;
  padding-left: 8px;
  font-family: 'Open Sans', 'Noto Sans', sans-serif;
}
.dlg-tabs {
  display: flex;
  align-items: flex-end;
  height: 34px;
  padding-left: 11px;
}
.dlg-tabs button {
  width: 64px;
  height: 23px;
  padding-top: 2px;
  border: 1px solid #d9d9d9;
  border-bottom: 0;
  border-left: 0;
}
.dlg-tabs button:first-child {
  width: 63px;
  border-left: 1px solid #d9d9d9;
}
.dlg-tabs .sel {
  position: relative;
  z-index: 1;
  width: 87px;
  height: 27px;
  margin-bottom: -1px;
  padding: 0 0 1px;
  border-left: 1px solid #d9d9d9;
  background: #fff;
}
.dlg-tabs .long {
  width: 140px;
}
.panel {
  min-height: 510px;
  margin: 0 10px 0 8px;
  padding: 0 17px 0 19px;
  border: 1px solid #dcdcdc;
  background: #fff;
}
.head {
  display: flex;
  align-items: flex-start;
  justify-content: space-between;
  height: 66px;
  padding: 18px 0 0 6px;
}
.head input {
  width: 296px;
  height: 28px;
  margin-top: 6px;
  padding: 0 2px 5px;
  border: 1px solid #333;
  outline: 0;
  font: inherit;
}
hr {
  height: 1px;
  margin: 0 3px 0 0;
  border: 0;
  background: #a0a0a0;
}
.sec {
  margin: 0;
  padding: 8px 0 7px;
}
.row {
  display: flex;
  align-items: center;
  height: 32px;
}
dt {
  width: 130px;
  padding-right: 32px;
}
dd {
  display: flex;
  align-items: center;
  flex: 1;
  margin: 0;
  overflow: hidden;
  white-space: nowrap;
}
.opens dt {
  width: 98px;
  padding: 0;
}
.opens svg {
  margin-right: 8px;
}
.btn {
  width: 98px;
  height: 26px;
  border: 1px solid #adadad;
  background: #e1e1e1;
}
.btn.change {
  width: 138px;
  margin: 2px 3px 0 auto;
}
.attrs {
  display: flex;
  align-items: center;
  height: 50px;
}
.attr-name {
  width: 98px;
  padding-bottom: 2px;
}
.attrs label {
  display: flex;
  align-items: center;
  width: 108px;
}
.attrs input {
  appearance: none;
  width: 16px;
  height: 16px;
  margin: 0 3px 0 0;
  border: 1px solid #333;
  background: #fff;
}
.adv {
  margin: 0 1px 0 auto;
}
.dlg-buttons {
  display: flex;
  justify-content: flex-end;
  gap: 10px;
  padding: 10px 9px 9px;
}
.btn.primary {
  border: 2px solid #0078d7;
}
.btn:disabled {
  border-color: #bfbfbf;
  background: #ccc;
  color: #838383;
}
</style>
